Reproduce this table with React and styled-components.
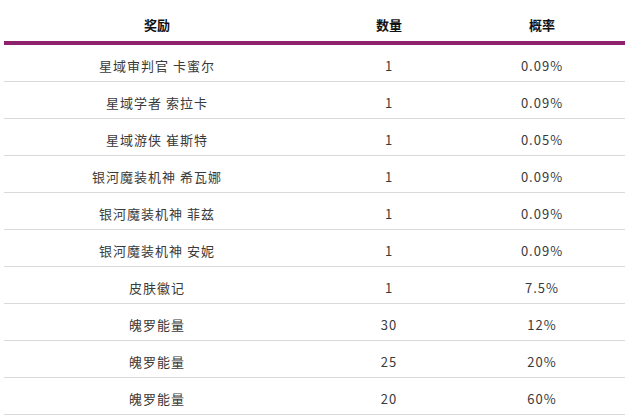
import styled, { createGlobalStyle } from "styled-components";

const GlobalStyle = createGlobalStyle`
  body {
    margin: 0;
    background: #fff;
    font-family: "Noto Sans CJK SC", "Noto Sans", sans-serif;
  }
`;

const rewards = [
  { name: "星域审判官 卡蜜尔", count: "1", rate: "0.09%" },
  { name: "星域学者 索拉卡", count: "1", rate: "0.09%" },
  { name: "星域游侠 崔斯特", count: "1", rate: "0.05%" },
  { name: "银河魔装机神 希瓦娜", count: "1", rate: "0.09%" },
  { name: "银河魔装机神 菲兹", count: "1", rate: "0.09%" },
  { name: "银河魔装机神 安妮", count: "1", rate: "0.09%" },
  { name: "皮肤徽记", count: "1", rate: "7.5%" },
  { name: "魄罗能量", count: "30", rate: "12%" },
  { name: "魄罗能量", count: "25", rate: "20%" },
  { name: "魄罗能量", count: "20", rate: "60%" },
];

const Table = styled.div`
  margin-left: 4px;
  width: 621px;
`;

const Row = styled.div`
  display: grid;
  grid-template-columns: 306px 158px 148px;
  border-bottom: ${(props) => (props.$head ? "4px solid #8e226d" : "1px solid #d9d9d9")};
`;

const Cell = styled.div`
  text-align: center;
  line-height: 19px;
  font-size: 13px;
  padding: ${(props) => (props.$head ? "15px 0 7px" : "11px 0 6px")};
  color: ${(props) => (props.$head ? "#111" : "#3a3a3a")};
  font-weight: ${(props) => (props.$head ? 700 : 400)};
  letter-spacing: ${(props) => (props.$head ? "0" : "1px")};
  white-space: nowrap;
`;

const App = () => {
  return (
    <>
      <GlobalStyle />
      <Table>
        <Row $head>
          <Cell $head>奖励</Cell>
          <Cell $head>数量</Cell>
          <Cell $head>概率</Cell>
        </Row>
        {rewards.map((r, i) => (
          <Row key={i}>
            <Cell>{r.name}</Cell>
            <Cell>{r.count}</Cell>
            <Cell>{r.rate}</Cell>
          </Row>
        ))}
      </Table>
    </>
  );
};

export default App;
